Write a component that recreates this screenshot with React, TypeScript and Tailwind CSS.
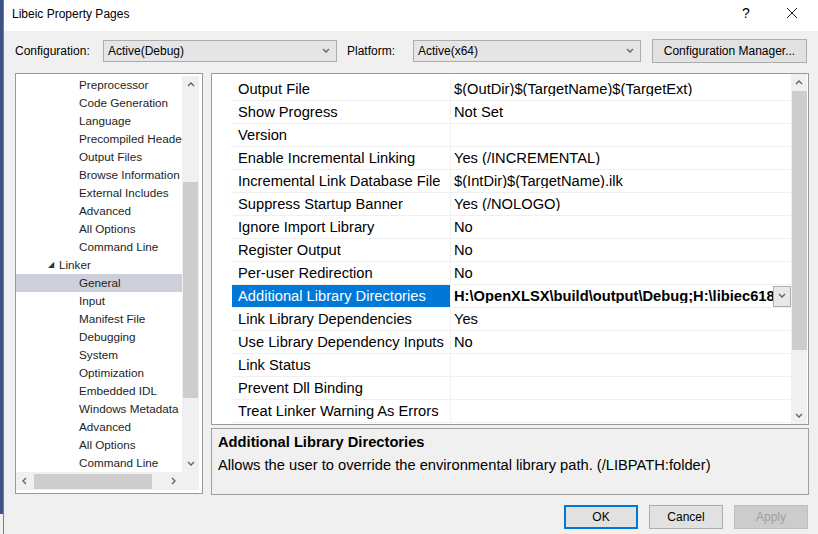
const treeItems: { label: string; level: number; expanded?: boolean; selected?: boolean }[] = [
  { label: "Preprocessor", level: 2 },
  { label: "Code Generation", level: 2 },
  { label: "Language", level: 2 },
  { label: "Precompiled Headers", level: 2 },
  { label: "Output Files", level: 2 },
  { label: "Browse Information", level: 2 },
  { label: "External Includes", level: 2 },
  { label: "Advanced", level: 2 },
  { label: "All Options", level: 2 },
  { label: "Command Line", level: 2 },
  { label: "Linker", level: 1, expanded: true },
  { label: "General", level: 2, selected: true },
  { label: "Input", level: 2 },
  { label: "Manifest File", level: 2 },
  { label: "Debugging", level: 2 },
  { label: "System", level: 2 },
  { label: "Optimization", level: 2 },
  { label: "Embedded IDL", level: 2 },
  { label: "Windows Metadata", level: 2 },
  { label: "Advanced", level: 2 },
  { label: "All Options", level: 2 },
  { label: "Command Line", level: 2 },
];

const props: { name: string; value: string; selected?: boolean }[] = [
  { name: "Output File", value: "$(OutDir)$(TargetName)$(TargetExt)" },
  { name: "Show Progress", value: "Not Set" },
  { name: "Version", value: "" },
  { name: "Enable Incremental Linking", value: "Yes (/INCREMENTAL)" },
  { name: "Incremental Link Database File", value: "$(IntDir)$(TargetName).ilk" },
  { name: "Suppress Startup Banner", value: "Yes (/NOLOGO)" },
  { name: "Ignore Import Library", value: "No" },
  { name: "Register Output", value: "No" },
  { name: "Per-user Redirection", value: "No" },
  {
    name: "Additional Library Directories",
    value: "H:\\OpenXLSX\\build\\output\\Debug;H:\\libiec61850\\build\\src\\Debug",
    selected: true,
  },
  { name: "Link Library Dependencies", value: "Yes" },
  { name: "Use Library Dependency Inputs", value: "No" },
  { name: "Link Status", value: "" },
  { name: "Prevent Dll Binding", value: "" },
  { name: "Treat Linker Warning As Errors", value: "" },
];

function Chevron({ dir, className = "" }: { dir: "up" | "down" | "left" | "right"; className?: string }) {
  const d = {
    up: "M1 5 L4 2 L7 5",
    down: "M1 2 L4 5 L7 2",
    left: "M5 1 L2 4 L5 7",
    right: "M2 1 L5 4 L2 7",
  }[dir];
  return (
    <svg width="8" height="8" viewBox="0 0 8 8" className={className}>
      <path d={d} fill="none" stroke="#606060" strokeWidth="1.3" />
    </svg>
  );
}

function Combo({ value, width }: { value: string; width: string }) {
  return (
    <div className={`${width} h-[22px] flex items-center justify-between bg-[#e5e5e5] border border-[#acacac] pl-[4px] pr-[6px]`}>
      <span>{value}</span>
      <Chevron dir="down" />
    </div>
  );
}

export default function App() {
  return (
    <div className="w-[818px] h-[534px] bg-[#f0f0f0] flex overflow-hidden text-[12px] text-black font-['Liberation_Sans',Arial,sans-serif]">
      <div className="w-[3px] shrink-0 flex flex-col">
        <div className="h-[514px] bg-[#3c5385]" />
      </div>
      <div className="flex-1 flex flex-col border-l border-[#7a7a7a]">
        {/* title bar */}
        <div className="h-[31px] bg-white flex items-start pt-[5px] pl-[8px] shrink-0">
          <span className="flex-1">Libeic Property Pages</span>
          <span className="w-[46px] text-center text-[14px] font-light leading-none pt-[1px]">?</span>
          <div className="w-[46px] mr-[3px] flex justify-center pt-[2px]">
            <svg width="12" height="12" viewBox="0 0 12 12">
              <path d="M1 1 L11 11 M11 1 L1 11" stroke="#222" strokeWidth="1" fill="none" />
            </svg>
          </div>
        </div>

        {/* configuration row */}
        <div className="flex items-center pl-[11px] pt-[8px] h-[32px]">
          <span className="w-[88px]">Configuration:</span>
          <Combo value="Active(Debug)" width="w-[234px]" />
          <span className="ml-[10px] w-[66px]">Platform:</span>
          <Combo value="Active(x64)" width="w-[228px]" />
          <div className="ml-[11px] w-[155px] h-[24px] bg-[#e1e1e1] border border-[#adadad] flex items-center justify-center">
            Configuration Manager...
          </div>
        </div>

        {/* panels */}
        <div className="flex pl-[11px] pt-[10px] gap-[8px]">
          {/* tree */}
          <div className="w-[188px] h-[421px] border border-[#9a9a9a] bg-white flex flex-col pt-[2px]">
            <div className="flex">
              <div className="w-[166px] h-[396px] overflow-hidden text-[11.7px] text-[#1e1e1e]">
                {treeItems.map((it, i) => (
                  <div
                    key={i}
                    className={`h-[18px] flex items-center whitespace-nowrap ${it.selected ? "bg-[#cdd0da]" : ""}`}
                  >
                    {it.level === 1 ? (
                      <>
                        <span className="w-[43px] text-right pr-[5px] text-[8px] text-[#333]">◢</span>
                        <span>{it.label}</span>
                      </>
                    ) : (
                      <span className="pl-[63px]">{it.label}</span>
                    )}
                  </div>
                ))}
              </div>
              <div className="w-[17px] h-[396px] bg-[#f0f0f0] flex flex-col items-center">
                <div className="h-[17px] flex items-center"><Chevron dir="up" /></div>
                <div className="h-[89px]" />
                <div className="w-[15px] h-[216px] bg-[#cdcdcd]" />
                <div className="flex-1" />
                <div className="h-[17px] flex items-center"><Chevron dir="down" /></div>
              </div>
            </div>
            <div className="flex h-[18px]">
              <div className="w-[166px] bg-[#f0f0f0] flex items-center">
                <div className="w-[17px] flex justify-center"><Chevron dir="left" /></div>
                <div className="w-[118px] h-[15px] bg-[#cdcdcd] ml-[1px]" />
                <div className="flex-1" />
                <div className="w-[17px] flex justify-center"><Chevron dir="right" /></div>
              </div>
              <div className="w-[17px] bg-[#f0f0f0]" />
            </div>
          </div>

          {/* right side */}
          <div className="flex flex-col gap-[3px]">
            <div className="w-[598px] h-[352px] border border-[#9a9a9a] bg-white flex">
              <div className="w-[20px] shrink-0" />
              <div className="w-[559px] text-[14.7px] leading-none pt-[4px]">
                {props.map((p, i) => (
                  <div key={i} className="h-[23px] flex border-b border-[#f0f0f0]">
                    <div
                      className={`w-[219px] shrink-0 pl-[6px] flex items-center whitespace-nowrap overflow-hidden border-r border-[#f0f0f0] ${
                        p.selected ? "bg-[#0078d7] text-white" : ""
                      }`}
                    >
                      {p.name}
                    </div>
                    <div className="flex-1 flex items-center min-w-0">
                      <span
                        className={`pl-[3px] whitespace-nowrap overflow-hidden flex-1 ${p.selected ? "font-bold" : ""}`}
                      >
                        {p.value}
                      </span>
                      {p.selected && (
                        <div className="w-[18px] h-[21px] shrink-0 bg-[#e8e8e8] border border-[#adadad] flex items-center justify-center">
                          <Chevron dir="down" />
                        </div>
                      )}
                    </div>
                  </div>
                ))}
              </div>
              <div className="w-[16px] bg-[#f0f0f0] flex flex-col items-center">
                <div className="h-[17px] flex items-center"><Chevron dir="up" /></div>
                <div className="w-[15px] h-[259px] bg-[#cdcdcd]" />
                <div className="flex-1" />
                <div className="h-[17px] flex items-center"><Chevron dir="down" /></div>
              </div>
            </div>

            <div className="w-[598px] h-[67px] border border-[#a0a0a0] px-[6px] pt-[2px] text-[14.7px]">
              <div className="font-bold h-[23px] flex items-center">Additional Library Directories</div>
              <div className="h-[23px] flex items-center">Allows the user to override the environmental library path. (/LIBPATH:folder)</div>
            </div>
          </div>
        </div>

        {/* buttons */}
        <div className="flex justify-end gap-[11px] pr-[10px] pt-[10px]">
          <div className="w-[74px] h-[24px] bg-[#e1e1e1] border-2 border-[#0078d7] flex items-center justify-center">OK</div>
          <div className="w-[74px] h-[24px] bg-[#e1e1e1] border border-[#adadad] flex items-center justify-center">Cancel</div>
          <div className="w-[74px] h-[24px] bg-[#cccccc] border border-[#bfbfbf] text-[#a0a0a0] flex items-center justify-center">Apply</div>
        </div>
      </div>
    </div>
  );
}
